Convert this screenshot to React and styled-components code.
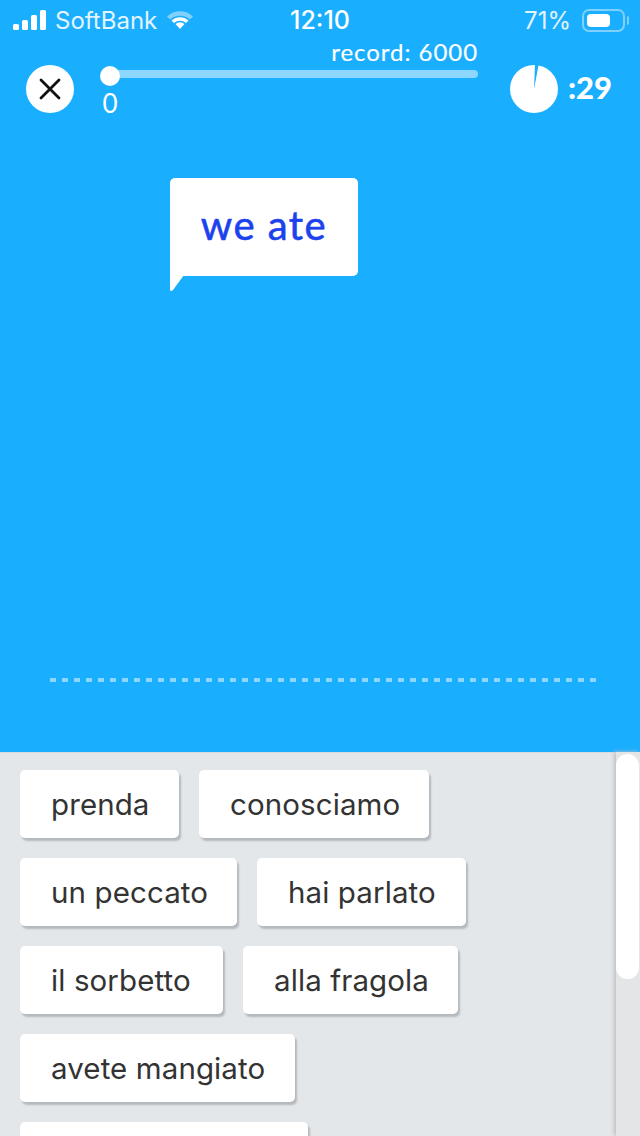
import React from "react";
import styled, { createGlobalStyle } from "styled-components";

const Global = createGlobalStyle`
  html, body { margin: 0; padding: 0; background: #e4e7ea; }
  * { box-sizing: border-box; }
`;

const Page = styled.div`
  width: 640px; height: 1136px; overflow: hidden;
  display: flex; flex-direction: column;
`;
const Stage = styled.div`
  height: 752px; background: #1aaeff; color: #fff;
  display: flex; flex-direction: column;
`;
const StatusBar = styled.div`
  height: 40px; padding: 0 15px 0 13px;
  display: grid; grid-template-columns: 1fr auto 1fr; align-items: center;
  font-family: Inter, "Liberation Sans", sans-serif; font-size: 24px; color: #fff;
`;
const StatusLeft = styled.div`display: flex; align-items: center;`;
const StatusRight = styled.div`display: flex; align-items: center; justify-content: flex-end;`;
const Signal = styled.div`display: flex; align-items: flex-end; gap: 3px; height: 20px; margin-right: 9px; margin-top: -1px;`;
const SignalBar = styled.span`
  width: 6px; height: ${p => p.$h}px; background: #fff; border-radius: 1.5px;
`;
const Carrier = styled.span`color: #e3f4ff; font-weight: 400; letter-spacing: 0;`;
const WifiIcon = styled.svg`margin-left: 9px; margin-top: -1px;`;
const Clock = styled.span`font-weight: 500; font-size: 25px; margin-left: 2px;`;
const Percent = styled.span`color: #e3f4ff; font-size: 24px;`;
const Battery = styled.div`
  position: relative;
  margin-left: 11px; width: 43px; height: 23px; padding: 3px;
  border: 2px solid #7fd0fb; border-radius: 7px;
`;
const BatteryFill = styled.div`width: 71%; height: 100%; background: #fff; border-radius: 4px;`;
const BatteryCap = styled.span`
  position: absolute; right: -6px; top: 5px; width: 2px; height: 9px;
  background: #7fd0fb; border-radius: 0 2px 2px 0;
`;

const Header = styled.div`
  height: 73px; padding: 25px 28px 0 26px;
  display: flex; align-items: flex-start;
`;
const CloseButton = styled.div`
  width: 48px; height: 48px; border-radius: 50%; background: #fff;
  display: flex; align-items: center; justify-content: center; flex: none;
`;
const Progress = styled.div`
  position: relative; margin-left: 26px; width: 378px; height: 48px; flex: none;
  padding: 5px 0 0 10px;
`;
const Track = styled.div`height: 8px; background: #8dd7ff; border-radius: 0 4px 4px 0;`;
const Knob = styled.div`
  position: absolute; left: 0; top: 1px; width: 20px; height: 20px; border-radius: 50%; background: #fff;
`;
const Record = styled.div`
  position: absolute; right: 0; top: -27px;
  font-family: Lato, "Liberation Sans", sans-serif; font-size: 24px; line-height: 28px; letter-spacing: 0.95px;
  -webkit-text-stroke: 0.15px #fff;
`;
const Score = styled.div`
  position: absolute; left: 0; width: 20px; top: 23px; text-align: center;
  font-family: Lato, "Liberation Sans", sans-serif; font-size: 26px; line-height: 30px;
`;
const Timer = styled.div`
  margin-left: 32px; display: flex; align-items: center; gap: 10px; height: 48px;
`;
const TimerText = styled.span`
  font-family: Lato, "Liberation Sans", sans-serif; font-weight: 900; font-size: 31px; line-height: 48px; margin-top: -4px;
`;

const BubbleArea = styled.div`padding: 65px 0 0 170px; flex: 1;`;
const Bubble = styled.div`
  position: relative; width: 188px; height: 98px; padding-bottom: 4px; background: #fff; border-radius: 5px 5px 5px 0;
  display: flex; align-items: center; justify-content: center;
  font-family: Lato, "Liberation Sans", sans-serif; font-size: 40px; letter-spacing: 1.5px;
  color: #1c42ee; -webkit-text-stroke: 0.6px #1c42ee;
`;
const BubbleTail = styled.svg`position: absolute; left: 0; top: 97px;`;

const DropLine = styled.div`
  margin: 0 44px 70px 50px; height: 4px;
  background: repeating-linear-gradient(to right, #8dd7ff 0 6px, transparent 6px 12px);
`;

const Tray = styled.div`
  flex: 1; display: flex; background: #e4e7ea; min-height: 0; box-shadow: inset 0 1px 1px #d6d9dc;
`;
const Chips = styled.div`
  flex: 1; padding: 18px 0 0 20px; display: flex; flex-direction: column; gap: 20px;
`;
const ChipRow = styled.div`display: flex; gap: 20px;`;
const Chip = styled.div`
  height: 68px; width: ${p => p.$w}px; padding: 0 0 0 31px; background: #fff; border-radius: 5px;
  box-shadow: 2px 3px 2px #b4b9bd;
  display: flex; align-items: center; flex: none;
  font-family: Inter, "Liberation Sans", sans-serif; font-size: 29.5px; color: #333;
  letter-spacing: 0.1px; white-space: nowrap;
`;
const Scroller = styled.div`
  width: 24px; padding: 2px 1px 0 0; background: #e4e5e6; box-shadow: -2px 0 4px #bcc2c5; flex: none;
`;
const Thumb = styled.div`height: 225px; background: #fff; border-radius: 12px;`;

const rows = [
  [["prenda", 159], ["conosciamo", 230]],
  [["un peccato", 217], ["hai parlato", 209]],
  [["il sorbetto", 203], ["alla fragola", 215]],
  [["avete mangiato", 275]],
  [["", 288]],
];

export default function App() {
  return (
    <Page>
      <Global />
      <Stage>
        <StatusBar>
          <StatusLeft>
            <Signal>
              {[6, 10, 15, 20].map(h => <SignalBar key={h} $h={h} />)}
            </Signal>
            <Carrier>SoftBank</Carrier>
            <WifiIcon width="28" height="22" viewBox="0 0 28 22">
              <path d="M1 7.5 A19 19 0 0 1 27 7.5 L24 10.5 A15 15 0 0 0 4 10.5 Z" fill="#7fd0fb" />
              <path d="M5.5 11.5 A12.5 12.5 0 0 1 22.5 11.5 L20 14 A9 9 0 0 0 8 14 Z" fill="#fff" />
              <path d="M9.5 15 A7 7 0 0 1 18.5 15 L14 20 Z" fill="#fff" />
            </WifiIcon>
          </StatusLeft>
          <Clock>12:10</Clock>
          <StatusRight>
            <Percent>71%</Percent>
            <Battery>
              <BatteryFill />
              <BatteryCap />
            </Battery>
          </StatusRight>
        </StatusBar>
        <Header>
          <CloseButton>
            <svg width="22" height="22" viewBox="0 0 22 22">
              <path d="M2 2 L20 20 M20 2 L2 20" stroke="#111" strokeWidth="2.8" strokeLinecap="round" />
            </svg>
          </CloseButton>
          <Progress>
            <Track />
            <Knob />
            <Record>record: 6000</Record>
            <Score>0</Score>
          </Progress>
          <Timer>
            <svg width="48" height="48" viewBox="0 0 48 48">
              <circle cx="24" cy="24" r="24" fill="#fff" />
              <path d="M24 24 L25 -1 L28.8 -1 Z" fill="#1aaeff" />
            </svg>
            <TimerText>:29</TimerText>
          </Timer>
        </Header>
        <BubbleArea>
          <Bubble>
            we ate
            <BubbleTail width="16" height="17" viewBox="0 0 16 17">
              <path d="M0 0 L14 0 L3.2 14.8 Q1.6 16.6 0 15.4 Z" fill="#fff" />
            </BubbleTail>
          </Bubble>
        </BubbleArea>
        <DropLine />
      </Stage>
      <Tray>
        <Chips>
          {rows.map((r, i) => (
            <ChipRow key={i}>
              {r.map(([t, w]) => <Chip key={w} $w={w}>{t}</Chip>)}
            </ChipRow>
          ))}
        </Chips>
        <Scroller><Thumb /></Scroller>
      </Tray>
    </Page>
  );
}
